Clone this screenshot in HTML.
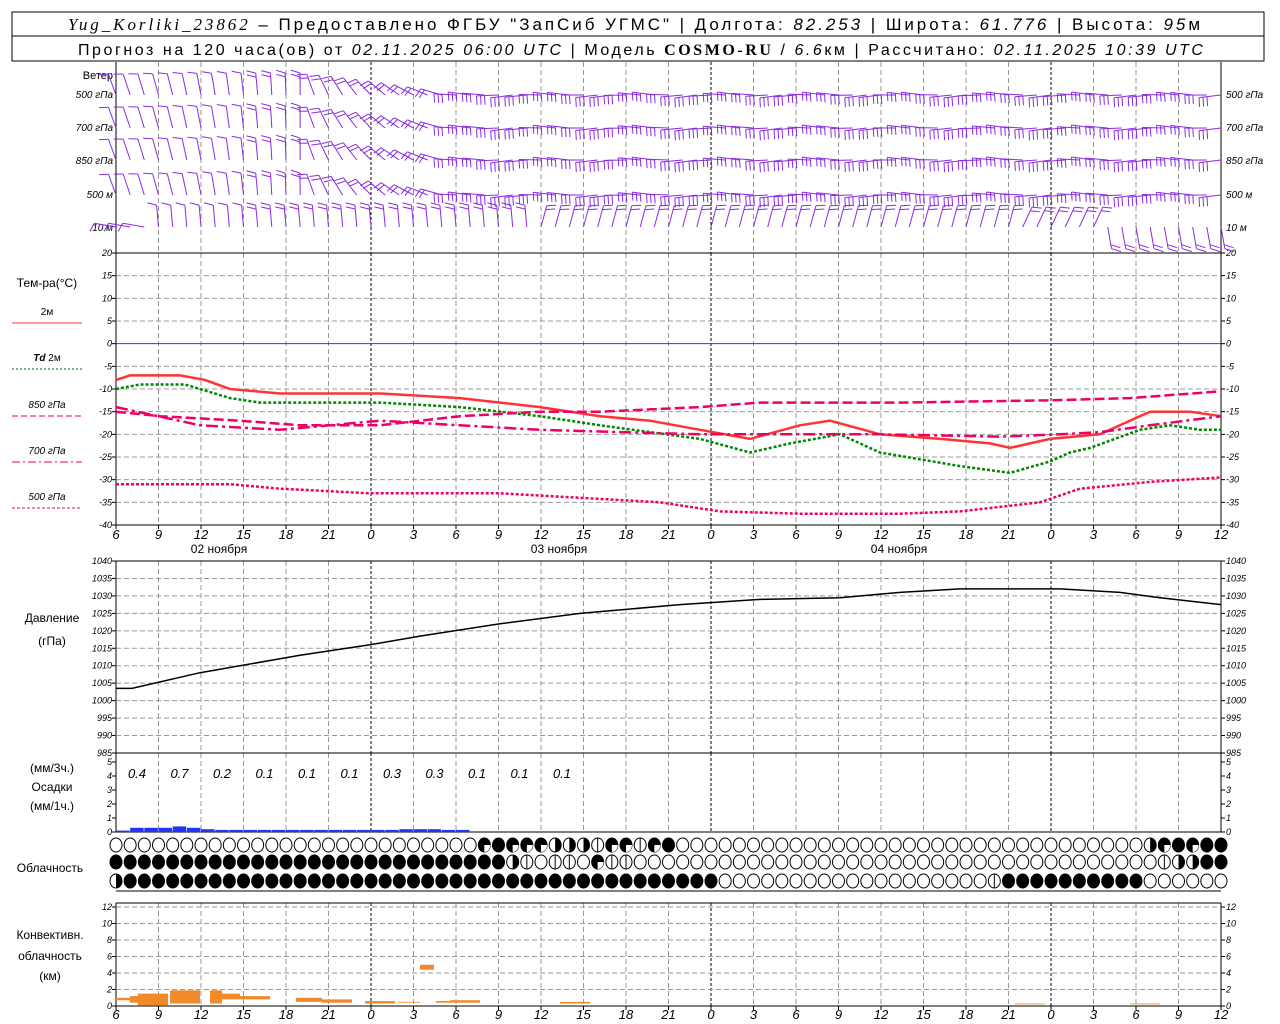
<!DOCTYPE html>
<html><head><meta charset="utf-8"><style>
html,body{margin:0;padding:0;background:#fff;width:1280px;height:1024px;overflow:hidden}
svg{display:block;font-family:"Liberation Sans",sans-serif}
</style></head><body>
<svg id="s" width="1280" height="1024" xmlns="http://www.w3.org/2000/svg">
<rect width="1280" height="1024" fill="#fff"/>
<rect x="12" y="12" width="1252" height="49" fill="none" stroke="#000" stroke-width="1"/>
<line x1="12" y1="36" x2="1264" y2="36" stroke="#000"/>
<text x="68" y="30" font-size="17" textLength="1132" lengthAdjust="spacing"><tspan font-family="Liberation Serif" font-style="italic">Yug_Korliki_23862</tspan> – Предоставлено ФГБУ "ЗапСиб УГМС" | Долгота: <tspan font-style="italic">82.253</tspan> | Широта: <tspan font-style="italic">61.776</tspan> | Высота: <tspan font-style="italic">95</tspan>м</text>
<text x="78" y="55" font-size="16" textLength="1125" lengthAdjust="spacing">Прогноз на 120 часа(ов) от <tspan font-style="italic">02.11.2025 06:00 UTC</tspan> | Модель <tspan font-family="Liberation Serif" font-weight="bold">COSMO-RU</tspan> / <tspan font-style="italic">6.6</tspan>км | Рассчитано: <tspan font-style="italic">02.11.2025 10:39 UTC</tspan></text>
<g id="g"></g>
</svg>
<script>
var g=document.getElementById('g'),h='';
function X(i){return 116+i*14.1667}
function L(x1,y1,x2,y2,c,w,d){h+='<line x1="'+x1+'" y1="'+y1+'" x2="'+x2+'" y2="'+y2+'" stroke="'+(c||'#000')+'" stroke-width="'+(w||1)+'"'+(d?' stroke-dasharray="'+d+'"':'')+'/>';}
function T(x,y,t,s,a,st){h+='<text x="'+x+'" y="'+y+'" font-size="'+(s||11)+'" text-anchor="'+(a||'start')+'"'+(st||'')+'>'+t+'</text>';}
function P(pts,c,w,d){h+='<polyline fill="none" points="'+pts.join(' ')+'" stroke="'+c+'" stroke-width="'+w+'"'+(d?' stroke-dasharray="'+d+'"':'')+'/>';}
var panels=[[62,253],[253,525],[561,753],[753,832],[903,1006]];
panels.forEach(function(p){
 for(var k=0;k<=26;k++){var x=116+k*42.5;
  if(k==6||k==14||k==22)L(x,p[0],x,p[1],'#000',1,'3,2');
  else if(k>0&&k<26)L(x,p[0],x,p[1],'#999',1,'5,3');}
 L(116,p[0],116,p[1]);L(1221,p[0],1221,p[1]);
});
L(116,253,1221,253);L(116,525,1221,525);L(116,561,1221,561);L(116,753,1221,753);L(116,832,1221,832);L(116,903,1221,903);L(116,1006,1221,1006);
function yT(t){return 253+(20-t)*272/60}
for(var t=20;t>=-40;t-=5){var y=yT(t);if(t==0)L(116,y,1221,y,'#33f',1);else if(t>-40&&t<20)L(116,y,1221,y,'#999',1,'5,3');
 T(112,y+3,t,9,'end',' font-style="italic"');T(1226,y+3,t,9,'start',' font-style="italic"');L(112,y,116,y);L(1221,y,1225,y);}
function yP(p){return 561+(1040-p)*192/55}
for(var p=1040;p>=985;p-=5){var y=yP(p);if(p<1040&&p>985)L(116,y,1221,y,'#999',1,'5,3');
 T(112,y+3,p,9,'end',' font-style="italic"');T(1226,y+3,p,9,'start',' font-style="italic"');L(112,y,116,y);L(1221,y,1225,y);}
function yR(r){return 832-r*14}
for(var r=0;r<=5;r++){var y=yR(r);T(112,y+3,r,9,'end',' font-style="italic"');T(1226,y+3,r,9,'start',' font-style="italic"');L(112,y,116,y);L(1221,y,1225,y);}
function yC(c){return 1006-c*8.25}
for(var c=0;c<=12;c+=2){var y=yC(c);if(c>0)L(116,y,1221,y,'#999',1,'5,3');T(112,y+3,c,9,'end',' font-style="italic"');T(1226,y+3,c,9,'start',' font-style="italic"');L(112,y,116,y);L(1221,y,1225,y);}
var hrs=[6,9,12,15,18,21,0,3,6,9,12,15,18,21,0,3,6,9,12,15,18,21,0,3,6,9,12];
hrs.forEach(function(v,k){var x=116+k*42.5;T(x,539,v,13,'middle',' font-style="italic"');T(x,1019,v,13,'middle',' font-style="italic"');L(x,525,x,529);L(x,1006,x,1010);});
T(219,553,'02 ноября',12,'middle');T(559,553,'03 ноября',12,'middle');T(899,553,'04 ноября',12,'middle');
T(113,79,'Ветер',11,'end');
[['500 гПа',98],['700 гПа',131],['850 гПа',164],['500 м',198],['10 м',231]].forEach(function(a){T(113,a[1],a[0],10,'end',' font-style="italic"');T(1226,a[1],a[0],10,'start',' font-style="italic"');});
T(47,287,'Тем-ра(°C)',12,'middle');
T(47,315,'2м',10,'middle');L(12,323,82,323,'#f33',1);
T(47,361,'<tspan font-weight="bold" font-style="italic">Td</tspan>  2м',10,'middle');L(12,369,82,369,'#060',1,'2,2');
T(47,408,'850 гПа',10,'middle',' font-style="italic"');L(12,416,82,416,'#e06',1,'6,3');
T(47,454,'700 гПа',10,'middle',' font-style="italic"');L(12,462,82,462,'#e06',1,'8,3,2,3');
T(47,500,'500 гПа',10,'middle',' font-style="italic"');L(12,508,82,508,'#e06',1,'3,2');
T(52,622,'Давление',12,'middle');T(52,645,'(гПа)',12,'middle');
T(52,772,'(мм/3ч.)',12,'middle');T(52,791,'Осадки',12,'middle');T(52,810,'(мм/1ч.)',12,'middle');
T(50,872,'Облачность',12,'middle');
T(50,939,'Конвективн.',12,'middle');T(50,960,'облачность',12,'middle');T(50,980,'(км)',12,'middle');
function C(arr,f){return arr.map(function(a){return a[0]+','+f(a[1]).toFixed(1)})}
P(C([[116,-8],[130,-7],[180,-7],[205,-8],[230,-10],[280,-11],[380,-11],[460,-12],[500,-13],[540,-14],[600,-16],[650,-17],[700,-19],[750,-21],[800,-18],[830,-17],[880,-20],[940,-21],[990,-22],[1010,-23],[1050,-21],[1100,-20],[1150,-15],[1190,-15],[1221,-16]],yT),'#f33',2.5);
P(C([[116,-10],[140,-9],[185,-9],[230,-12],[260,-13],[380,-13],[460,-14],[540,-16],[600,-18],[700,-21],[750,-24],[790,-22],[840,-20],[880,-24],[960,-27],[1010,-28.5],[1050,-26],[1070,-24],[1090,-23],[1140,-19],[1170,-18],[1200,-19],[1221,-19]],yT),'#080',2.5,'3,2');
P(C([[116,-15],[160,-16],[240,-17],[300,-18],[380,-18],[460,-16],[540,-15],[600,-15],[700,-14],[760,-13],[900,-13],[1050,-12.5],[1130,-12],[1221,-10.5]],yT),'#e06',2.5,'10,4');
P(C([[116,-14],[200,-18],[280,-19],[380,-17],[460,-18],[540,-19],[620,-19.5],[700,-20],[880,-20],[1000,-20.5],[1060,-20],[1100,-19.5],[1150,-18],[1221,-16]],yT),'#e06',2.5,'12,4,3,4');
P(C([[116,-31],[230,-31],[280,-32],[370,-33],[500,-33],[580,-34],[660,-35],[720,-37],[800,-37.5],[900,-37.5],[960,-37],[1000,-36],[1040,-35],[1080,-32],[1150,-30.5],[1221,-29.5]],yT),'#e06',2.5,'3,2');
P(C([[116,1003.5],[132,1003.5],[200,1008],[300,1013],[370,1016],[420,1018.5],[500,1022],[580,1025],[680,1027.5],[760,1029],[840,1029.5],[900,1031],[960,1032],[1060,1032],[1120,1031],[1160,1029.5],[1221,1027.5]],yP),'#000',1.5);
['0.4','0.7','0.2','0.1','0.1','0.1','0.3','0.3','0.1','0.1','0.1'].forEach(function(v,k){T(137+k*42.5,778,v,13,'middle',' font-style="italic"');});
var pr=[0.1,0.3,0.3,0.3,0.4,0.3,0.2,0.15,0.15,0.15,0.15,0.15,0.15,0.15,0.15,0.15,0.15,0.15,0.15,0.15,0.2,0.2,0.2,0.15,0.15,0.05,0.05,0.05,0.05,0,0.05];
pr.forEach(function(v,k){if(v>0)h+='<rect x="'+X(k)+'" y="'+(yR(v))+'" width="13.5" height="'+(v*14)+'" fill="#23f"/>';});
[[116,1,0.7],[130,1.2,0.4],[138,1.5,0.1],[170,1.9,0.3],[210,1.9,0.3],[222,1.5,0.8],[240,1.2,0.8],[296,1.0,0.5],[322,0.8,0.4],[365,0.6,0.3],[398,0.5,0.4],[420,5,4.4],[436,0.6,0.4],[450,0.7,0.4],[560,0.5,0.3],[1015,0.3,0.2],[1130,0.3,0.2]].forEach(function(a,k,arr){var w=(k+1<arr.length?Math.min(arr[k+1][0]-a[0],30):14);if(a[1]==5)w=14;if(a[0]>=1000)w=30;
 h+='<rect x="'+a[0]+'" y="'+yC(a[1])+'" width="'+w+'" height="'+((a[1]-a[2])*8.25)+'" fill="#f08a2a"/>';});
function cl(x,y,t){var s='';
 if(t==0)s='<ellipse cx="'+x+'" cy="'+y+'" rx="6" ry="7" fill="#fff" stroke="#000"/>';
 else if(t==4)s='<ellipse cx="'+x+'" cy="'+y+'" rx="6" ry="7" fill="#000" stroke="#000"/>';
 else if(t==2)s='<ellipse cx="'+x+'" cy="'+y+'" rx="6" ry="7" fill="#fff" stroke="#000"/><path d="M'+x+' '+(y-7)+'A6 7 0 0 1 '+x+' '+(y+7)+'Z" fill="#000"/>';
 else if(t==3)s='<ellipse cx="'+x+'" cy="'+y+'" rx="6" ry="7" fill="#000" stroke="#000"/><path d="M'+x+' '+y+'L'+(x+6)+' '+y+'A6 7 0 0 1 '+x+' '+(y+7)+'Z" fill="#fff"/>';
 else s='<ellipse cx="'+x+'" cy="'+y+'" rx="6" ry="7" fill="#fff" stroke="#000"/><line x1="'+x+'" y1="'+(y-7)+'" x2="'+x+'" y2="'+(y+7)+'" stroke="#000"/>';
 return s;}
function rep(c,n){return new Array(n+1).join(c)}
var r1=rep('0',26)+'34333222133134'+rep('0',33)+'234344';
var r2=rep('4',28)+'2101103110'+rep('0',36)+'12244';
var r3='2'+rep('4',42)+rep('0',19)+'1'+rep('4',10)+rep('0',6);
for(var i=0;i<79;i++){var x=X(i);h+=cl(x,845,+r1[i]||0)+cl(x,862,+r2[i]||0)+cl(x,881,+r3[i]||0);}
L(116,891,1221,891);
var rows=[95,128,160,195,227];
rows.forEach(function(y0,r){
 for(var i=0;i<79;i++){var x=X(i);var a;
  if(r<4){if(i<14)a=-20+i*1.5;else if(i<24)a=-20-(i-14)*6;else a=-75;}
  else{a=i<3?-80:(i<30?-5:(i<64?15:(i<70?25:170)));}
  var rad=a*Math.PI/180,len=22,dx=Math.sin(rad)*len,dy=-Math.cos(rad)*len;
  var yy=y0;
  if(r<4&&i>=24){dx=-len;dy=-3*Math.cos(i);}
  var tx=x+dx,ty=yy+dy;
  h+='<line x1="'+x.toFixed(1)+'" y1="'+yy+'" x2="'+tx.toFixed(1)+'" y2="'+ty.toFixed(1)+'" stroke="#8a2be2" stroke-width="1"/>';
  var nb=(r<4&&i>=24)?3:(i<10?1:2);
  var ux=dx/len,uy=dy/len;var px=-uy,py=ux; if(py<0&&!(r<4&&i>=24)){px=-px;py=-py;}
  if(r<4&&i>=24){px=0.4;py=1;}
  if(r==4&&a>90){px=1;py=0;}
  for(var b=0;b<nb;b++){var bx=tx-ux*b*4,by=ty-uy*b*4;
   h+='<line x1="'+bx.toFixed(1)+'" y1="'+by.toFixed(1)+'" x2="'+(bx+px*9+ux*3).toFixed(1)+'" y2="'+(by+py*9+uy*3).toFixed(1)+'" stroke="#8a2be2" stroke-width="1"/>';}
 }});
g.innerHTML=h;
</script>
</body></html>
